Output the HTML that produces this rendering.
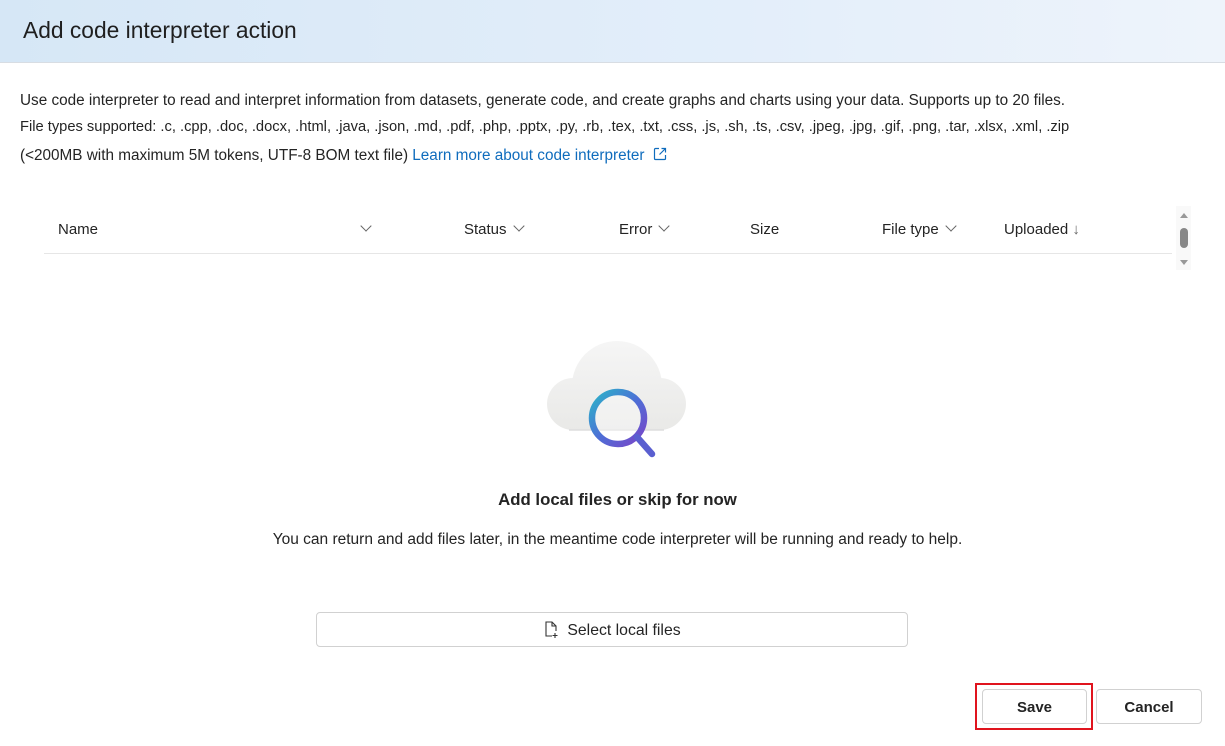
<!DOCTYPE html>
<html><head><style>
*{margin:0;padding:0;box-sizing:border-box}
body{width:1225px;height:746px;background:#fff;font-family:"Liberation Sans",sans-serif;color:#242424;position:relative;overflow:hidden}
.hdr{position:absolute;left:0;top:0;width:1225px;height:63px;background:linear-gradient(90deg,#d6e7f6,#e3eefa 60%,#eef4fb);border-bottom:1px solid #d8dde3}
.hdr h1{position:absolute;left:23px;top:17px;font-size:22.8px;font-weight:normal;color:#1f1f1f}
.t{position:absolute;left:20px;white-space:nowrap}
a{color:#0f6cbd;text-decoration:none}
.th{position:absolute;top:221px;font-size:15px;color:#242424}
.chev{display:inline-block;width:8px;height:8px;border-right:1px solid #666;border-bottom:1px solid #666;transform:rotate(45deg);margin-left:8px;position:relative;top:-4px}
.btn{position:absolute;border:1px solid #d1d1d1;border-radius:4px;background:#fff;font-size:15px;text-align:center;font-weight:bold;color:#242424}
</style></head><body>
<div class="hdr"><h1>Add code interpreter action</h1></div>
<div class="t" style="top:92px;font-size:15.3px">Use code interpreter to read and interpret information from datasets, generate code, and create graphs and charts using your data. Supports up to 20 files.</div>
<div class="t" style="top:119px;font-size:14.7px">File types supported: .c, .cpp, .doc, .docx, .html, .java, .json, .md, .pdf, .php, .pptx, .py, .rb, .tex, .txt, .css, .js, .sh, .ts, .csv, .jpeg, .jpg, .gif, .png, .tar, .xlsx, .xml, .zip</div>
<div class="t" style="top:147px;font-size:15.3px">(&lt;200MB with maximum 5M tokens, UTF-8 BOM text file) <a>Learn more about code interpreter</a> <svg width="14" height="14" viewBox="0 0 14 14" style="margin-left:4px;vertical-align:-1px"><path d="M6 1.5H2.5a1 1 0 0 0-1 1v9a1 1 0 0 0 1 1h9a1 1 0 0 0 1-1V8M8.5 1.5h4v4M12.5 1.5L6.5 7.5" fill="none" stroke="#0f6cbd" stroke-width="1.2"/></svg></div>

<div class="th" style="left:58px">Name</div>
<span class="chev" style="position:absolute;left:354px;top:222px"></span>
<div class="th" style="left:464px">Status<span class="chev"></span></div>
<div class="th" style="left:619px">Error<span class="chev"></span></div>
<div class="th" style="left:750px">Size</div>
<div class="th" style="left:882px">File type<span class="chev"></span></div>
<div class="th" style="left:1004px">Uploaded <span style="color:#666">↓</span></div>
<div style="position:absolute;left:44px;top:253px;width:1128px;height:1px;background:#e6e6e6"></div>
<div style="position:absolute;left:1176px;top:206px;width:15px;height:64px;background:#f9f9f9"></div>
<svg style="position:absolute;left:1178px;top:210px" width="12" height="58"><path d="M2 8L6 3L10 8Z" fill="#999"/><rect x="2" y="18" width="8" height="20" rx="4" fill="#888"/><path d="M2 50L6 55L10 50Z" fill="#999"/></svg>

<svg style="position:absolute;left:545px;top:338px" width="145" height="125" viewBox="0 0 145 125">
<defs><linearGradient id="g" x1="0" y1="0" x2="1" y2="1"><stop offset="0" stop-color="#2bb5c8"/><stop offset=".5" stop-color="#4d6fd6"/><stop offset="1" stop-color="#7a44c8"/></linearGradient>
<linearGradient id="c" gradientUnits="userSpaceOnUse" x1="0" y1="0" x2="0" y2="92"><stop offset="0" stop-color="#f6f6f6"/><stop offset="1" stop-color="#e9e9e7"/></linearGradient>
<clipPath id="cl"><rect x="0" y="0" width="145" height="92"/></clipPath></defs>
<g clip-path="url(#cl)" fill="url(#c)">
<circle cx="72" cy="48" r="45"/><circle cx="28" cy="66" r="26"/><circle cx="115" cy="66" r="26"/><rect x="28" y="60" width="87" height="32"/>
</g>
<path d="M24 92h95" stroke="#ddd" stroke-width="1.5"/>
<circle cx="73" cy="80" r="26" fill="rgba(255,255,255,.35)" stroke="url(#g)" stroke-width="6.5"/>
<path d="M92 99L107 116" stroke="#5a5fd0" stroke-width="6.5" stroke-linecap="round"/>
</svg>

<div style="position:absolute;left:0;width:1235px;top:490px;text-align:center;font-size:16.8px;font-weight:bold;color:#242424">Add local files or skip for now</div>
<div style="position:absolute;left:0;width:1235px;top:531px;text-align:center;font-size:15.5px">You can return and add files later, in the meantime code interpreter will be running and ready to help.</div>

<div class="btn" style="left:316px;top:612px;width:592px;height:35px;line-height:35px;font-weight:normal;font-size:15.8px"><svg width="16" height="18" viewBox="0 0 16 18" style="vertical-align:-3px;margin-right:8px"><path d="M9 16H3V2h6l4 4v5M9 2v4h4M12 13v5M9.5 15.5h5" fill="none" stroke="#333" stroke-width="1.1"/></svg>Select local files</div>

<div style="position:absolute;left:975px;top:683px;width:118px;height:47px;border:2px solid #e0141e"></div>
<div class="btn" style="left:982px;top:689px;width:105px;height:35px;line-height:35px">Save</div>
<div class="btn" style="left:1096px;top:689px;width:106px;height:35px;line-height:35px">Cancel</div>
</body></html>
